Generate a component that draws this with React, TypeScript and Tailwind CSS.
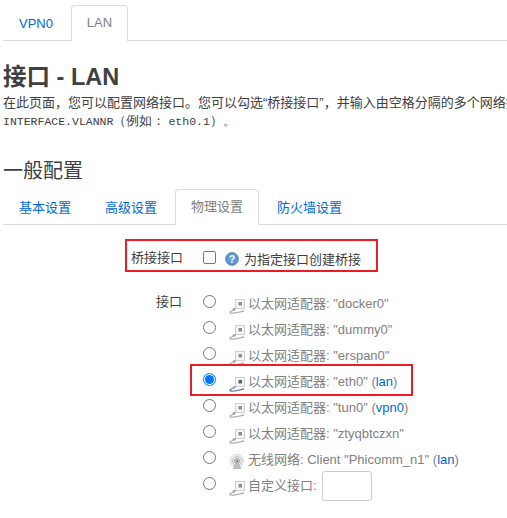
const font = "[font-family:'Liberation_Sans','Noto_Sans_CJK_SC',sans-serif]";

function EthIcon({ active }: { active?: boolean }) {
  const cable = active ? '#5b84b8' : '#b0b0b0';
  return (
    <svg width="16" height="16" viewBox="0 0 16 16" className="shrink-0">
      <rect x="6.5" y="1.5" width="9" height="9" fill="#f6f6f6" stroke="#cfcfcf" />
      <rect x="9.5" y="4" width="3.5" height="3.5" fill={active ? '#55606a' : '#8b8f8c'} />
      <path d="M7 10 L4 10.5 L3 13 L6 12.5 Z" fill="#9a9a9a" />
      <path d="M3.5 12.5 C1 13.5 0 14.5 2 15 C5 15.5 10 14 15 13" fill="none" stroke={cable} strokeWidth="1.3" />
    </svg>
  );
}

function WifiIcon() {
  return (
    <svg width="16" height="16" viewBox="0 0 16 16" className="shrink-0">
      <circle cx="8" cy="7" r="6.5" fill="#f3f3f3" stroke="#d6d6d6" />
      <circle cx="8" cy="7" r="4.5" fill="#ededed" stroke="#bcbcbc" />
      <circle cx="8" cy="7" r="2.5" fill="#cfcfcf" stroke="#9a9a9a" />
      <circle cx="8" cy="7" r="1" fill="#707070" />
      <path d="M6 10 L3.5 15 H12.5 L10 10 Z" fill="#bdbdbd" />
    </svg>
  );
}

function HelpIcon() {
  return (
    <svg width="14" height="14" viewBox="0 0 14 14" className="shrink-0">
      <circle cx="7" cy="7" r="6.5" fill="#4a8fd0" stroke="#8a9cae" />
      <circle cx="7" cy="7" r="4.8" fill="#5b9fdc" />
      <text x="7" y="10.5" textAnchor="middle" fontSize="10" fontWeight="700" fill="#ffffff" fontFamily="Liberation Sans">?</text>
    </svg>
  );
}

function Radio({ checked }: { checked?: boolean }) {
  return (
    <span className={`w-[13px] h-[13px] rounded-full shrink-0 flex items-center justify-center border bg-white ${checked ? 'border-[#0075ff]' : 'border-[#767676]'}`}>
      {checked && <span className="w-[9px] h-[9px] rounded-full bg-[#0075ff]" />}
    </span>
  );
}

function Tab({ label, active, w }: { label: string; active?: boolean; w: string }) {
  return (
    <div
      className={`h-[36px] flex items-center justify-center text-[13px] rounded-t-[4px] border border-b-0 -mb-px ${w} ${
        active ? 'bg-white text-[#808080] border-[#dddddd] pb-px' : 'text-[#0069d6] border-transparent'
      }`}
    >
      {label}
    </div>
  );
}

function IfaceRow({
  name,
  zone,
  icon,
  checked,
}: {
  name: string;
  zone?: string;
  icon?: 'wifi';
  checked?: boolean;
}) {
  return (
    <div className="h-[26px] flex items-center text-[13px] text-[#808080]">
      <Radio checked={checked} />
      <span className="ml-[13px] mr-[2px] mt-[9px]">{icon === 'wifi' ? <WifiIcon /> : <EthIcon active={checked} />}</span>
      <span className="ml-[1px] whitespace-nowrap mt-[6px]">
        {name}
        {zone && (
          <>
            {' '}
            (<span className="text-[#0069d6]">{zone}</span>)
          </>
        )}
      </span>
    </div>
  );
}

export default function App() {
  return (
    <div className={`w-[507px] h-[518px] overflow-hidden bg-white text-[#404040] ${font}`}>
      <div className="pt-[5px] pl-[3px]">
        <div className="flex border-b border-[#dddddd] h-[36px]">
          <Tab label="VPN0" w="w-[68px] pr-[2px]" />
          <Tab label="LAN" active w="w-[57px]" />
        </div>
      </div>

      <h1 className="mt-[21px] pl-[3px] text-[23.5px] leading-[30px] font-bold text-[#404040]">接口 - LAN</h1>
      <p className="pl-[3px] mt-[2px] text-[13px] leading-[18px] whitespace-nowrap text-[#404040]">
        在此页面，您可以配置网络接口。您可以勾选“桥接接口”，并输入由空格分隔的多个网络接口的名称来桥接多个接口。
      </p>
      <p className="pl-[3px] mt-[1px] text-[11.5px] leading-[18px] whitespace-nowrap text-[#404040] font-mono">
        INTERFACE.VLANNR<span className="text-[13px]">（例如：</span>
        <span className="ml-[3px]">eth0.1</span>
        <span className="text-[13px]">）。</span>
      </p>

      <h2 className="mt-[25px] pl-[3px] text-[20px] leading-[30px] font-normal text-[#404040]">一般配置</h2>

      <div className="mt-[3px] ml-[3px] flex border-b border-[#dddddd] h-[36px]">
        <Tab label="基本设置" w="w-[84px]" />
        <Tab label="高级设置" w="w-[88px]" />
        <Tab label="物理设置" active w="w-[84px]" />
        <Tab label="防火墙设置" w="w-[101px]" />
      </div>

      <div className="mt-[14px] ml-[125px] w-[253px] h-[33px] border-2 border-[#ed1c24] flex items-center text-[13px]">
        <span className="ml-[4px] w-[52px] text-[#404040] whitespace-nowrap mt-[5px]">桥接接口</span>
        <span className="ml-[20px] w-[13px] h-[13px] rounded-[2px] border border-[#767676] bg-white mt-[3px]" />
        <span className="ml-[9px] mt-[7px]"><HelpIcon /></span>
        <span className="ml-[5px] text-[#404040] whitespace-nowrap mt-[9px]">为指定接口创建桥接</span>
      </div>

      <div className="mt-[16px] flex">
        <div className="w-[182px] text-right text-[13px] text-[#404040] leading-[26px] mt-[1px]">接口</div>
        <div className="ml-[21px] flex flex-col">
          <IfaceRow name={'以太网适配器: "docker0"'} />
          <IfaceRow name={'以太网适配器: "dummy0"'} />
          <IfaceRow name={'以太网适配器: "erspan0"'} />
          <div className="relative">
            <div className="absolute -left-[13px] top-[-2px] w-[223px] h-[32px] border-2 border-[#ed1c24]" />
            <IfaceRow name={'以太网适配器: "eth0"'} zone="lan" checked />
          </div>
          <IfaceRow name={'以太网适配器: "tun0"'} zone="vpn0" />
          <IfaceRow name={'以太网适配器: "ztyqbtczxn"'} />
          <IfaceRow name={'无线网络: Client "Phicomm_n1"'} zone="lan" icon="wifi" />
          <div className="h-[26px] flex items-center text-[13px] text-[#808080]">
            <Radio />
            <span className="ml-[13px] mr-[2px] mt-[9px]"><EthIcon /></span>
            <span className="ml-[1px] whitespace-nowrap mt-[6px]">自定义接口:</span>
            <span className="ml-[5px] w-[50px] h-[30px] mt-[5px] shrink-0 rounded-[3px] border border-[#cccccc] bg-white" />
          </div>
        </div>
      </div>
    </div>
  );
}
